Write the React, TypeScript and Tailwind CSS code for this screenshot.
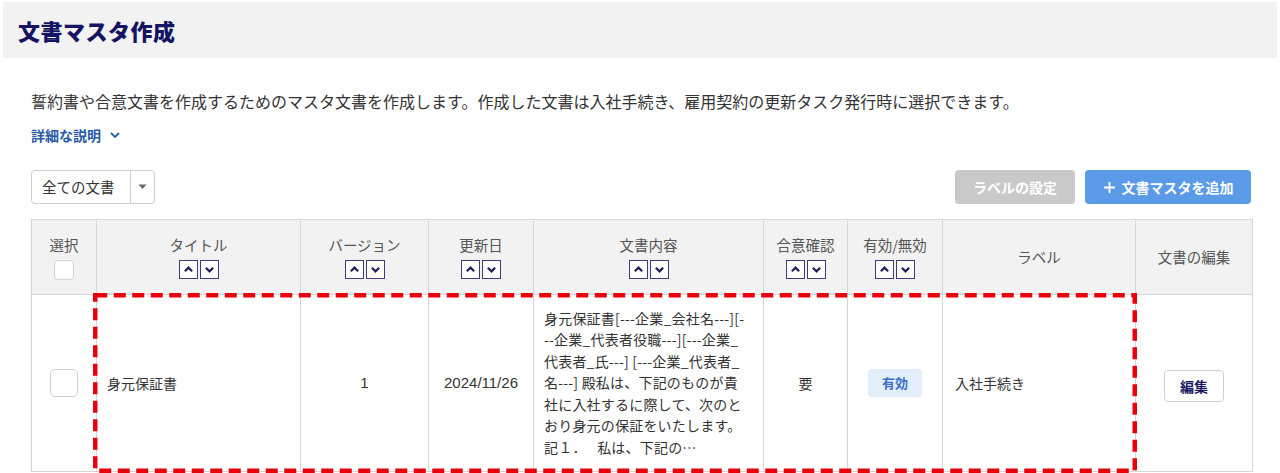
import React from "react";

const font = { fontFamily: '"Noto Sans CJK JP", "Noto Sans", "Liberation Sans", sans-serif' };

function SortButtons() {
  return (
    <div className="flex justify-center gap-[2px] mt-[5px]">
      <span className="w-[19px] h-[19px] border-[1.5px] border-[#3d3d7c] bg-white flex items-center justify-center">
        <svg width="11" height="11" viewBox="0 0 12 12"><path d="M2 8 L6 4 L10 8" fill="none" stroke="#1f1f5c" strokeWidth="2.4" /></svg>
      </span>
      <span className="w-[19px] h-[19px] border-[1.5px] border-[#3d3d7c] bg-white flex items-center justify-center">
        <svg width="11" height="11" viewBox="0 0 12 12"><path d="M2 4 L6 8 L10 4" fill="none" stroke="#1f1f5c" strokeWidth="2.4" /></svg>
      </span>
    </div>
  );
}

function Th({ label, sort = true, children }: { label: string; sort?: boolean; children?: React.ReactNode }) {
  return (
    <th className="border border-[#d6d6d6] bg-[#f2f2f2] font-normal text-[14.5px] text-[#555] align-middle p-0">
      <div className="leading-[20px]">{label}</div>
      {sort && <SortButtons />}
      {children}
    </th>
  );
}

export default function App() {
  const lines = [
    "身元保証書[---企業_会社名---][-",
    "--企業_代表者役職---][---企業_",
    "代表者_氏---] [---企業_代表者_",
    "名---] 殿私は、下記のものが貴",
    "社に入社するに際して、次のと",
    "おり身元の保証をいたします。",
    "記１．\u3000 私は、下記の…",
  ];
  return (
    <div className="bg-white w-[1280px] h-[473px] overflow-hidden pt-[2px] px-[3px]" style={font}>
      <div className="bg-[#f2f2f2] h-[56px] w-[1274px] flex items-center pl-[15px]">
        <h1 className="text-[22px] font-extrabold text-[#141462] tracking-[0.5px]">文書マスタ作成</h1>
      </div>
      <div className="pl-[28px] pr-[26px]">
        <p className="mt-[33px] text-[16px] text-[#333] leading-[20px]">
          誓約書や合意文書を作成するためのマスタ文書を作成します。作成した文書は入社手続き、雇用契約の更新タスク発行時に選択できます。
        </p>
        <div className="mt-[14px] flex items-center gap-[8px] text-[#2a5aa6] text-[14px] font-bold leading-[20px]">
          <span>詳細な説明</span>
          <svg width="12" height="12" viewBox="0 0 12 12"><path d="M2 4 L6 8 L10 4" fill="none" stroke="#2a5aa6" strokeWidth="1.8" /></svg>
        </div>
        <div className="mt-[25px] flex items-center justify-between h-[34px]">
          <div className="flex h-[34px] w-[124px] border border-[#d0d0d0] rounded-[4px] bg-white">
            <div className="flex-1 flex items-center pl-[10px] text-[14.5px] text-[#333]">全ての文書</div>
            <div className="w-[24px] border-l border-[#d0d0d0] flex items-center justify-center">
              <svg width="9" height="6" viewBox="0 0 9 6"><path d="M0.5 0.5 L8.5 0.5 L4.5 5 Z" fill="#666" /></svg>
            </div>
          </div>
          <div className="flex gap-[10px]">
            <button className="h-[34px] w-[120px] rounded-[4px] bg-[#c9c9c9] text-white font-bold text-[14px]">ラベルの設定</button>
            <button className="h-[34px] w-[166px] rounded-[4px] bg-[#5b9ae6] text-white font-bold text-[14px] flex items-center justify-center gap-[6px]">
              <svg width="13" height="13" viewBox="0 0 13 13"><path d="M6.5 1 V12 M1 6.5 H12" stroke="white" strokeWidth="1.8" /></svg>
              <span>文書マスタを追加</span>
            </button>
          </div>
        </div>
        <div className="relative mt-[15px]">
          <table className="border-collapse table-fixed w-[1221px]">
            <colgroup>
              <col style={{ width: 65 }} />
              <col style={{ width: 204 }} />
              <col style={{ width: 128 }} />
              <col style={{ width: 105 }} />
              <col style={{ width: 230 }} />
              <col style={{ width: 84 }} />
              <col style={{ width: 95 }} />
              <col style={{ width: 193 }} />
              <col style={{ width: 117 }} />
            </colgroup>
            <thead>
              <tr className="h-[75px]">
                <Th label="選択" sort={false}>
                  <div className="flex justify-center mt-[5px]">
                    <span className="w-[20px] h-[20px] border border-[#cfcfcf] rounded-[4px] bg-white" />
                  </div>
                </Th>
                <Th label="タイトル" />
                <Th label="バージョン" />
                <Th label="更新日" />
                <Th label="文書内容" />
                <Th label="合意確認" />
                <Th label="有効/無効" />
                <Th label="ラベル" sort={false} />
                <Th label="文書の編集" sort={false} />
              </tr>
            </thead>
            <tbody>
              <tr className="h-[177px] text-[14px] text-[#333]">
                <td className="border border-[#d6d6d6] text-center align-middle">
                  <span className="inline-block w-[28px] h-[28px] border border-[#cfcfcf] rounded-[5px] bg-white align-middle" />
                </td>
                <td className="border border-[#d6d6d6] pl-[10px] align-middle">身元保証書</td>
                <td className="border border-[#d6d6d6] text-center align-middle text-[15px]" style={{ fontFamily: '"Liberation Sans", sans-serif' }}>1</td>
                <td className="border border-[#d6d6d6] text-center align-middle text-[15px]" style={{ fontFamily: '"Liberation Sans", sans-serif' }}>2024/11/26</td>
                <td className="border border-[#d6d6d6] pl-[10px] align-middle">
                  <div className="leading-[21.5px] text-[14px] tracking-[0.2px]">
                    {lines.map((l, i) => (
                      <div key={i} className="whitespace-pre">{l}</div>
                    ))}
                  </div>
                </td>
                <td className="border border-[#d6d6d6] text-center align-middle">要</td>
                <td className="border border-[#d6d6d6] text-center align-middle">
                  <span className="inline-flex items-center justify-center w-[54px] h-[28px] rounded-[4px] bg-[#e3eefb] text-[#3a6fc4] font-bold text-[13px]">有効</span>
                </td>
                <td className="border border-[#d6d6d6] pl-[12px] align-middle">入社手続き</td>
                <td className="border border-[#d6d6d6] text-center align-middle">
                  <button className="w-[60px] h-[32px] mt-[6px] border border-[#cfcfcf] rounded-[4px] bg-white text-[#1b1b66] font-bold text-[14px]">編集</button>
                </td>
              </tr>
            </tbody>
          </table>
          <svg className="absolute left-[62px] top-[74px] pointer-events-none" width="1044" height="180" viewBox="0 0 1044 180">
            <rect x="2.25" y="2.25" width="1039.5" height="175.5" fill="none" stroke="#e8000b" strokeWidth="4.5" strokeDasharray="12 6.5" />
          </svg>
        </div>
      </div>
    </div>
  );
}
